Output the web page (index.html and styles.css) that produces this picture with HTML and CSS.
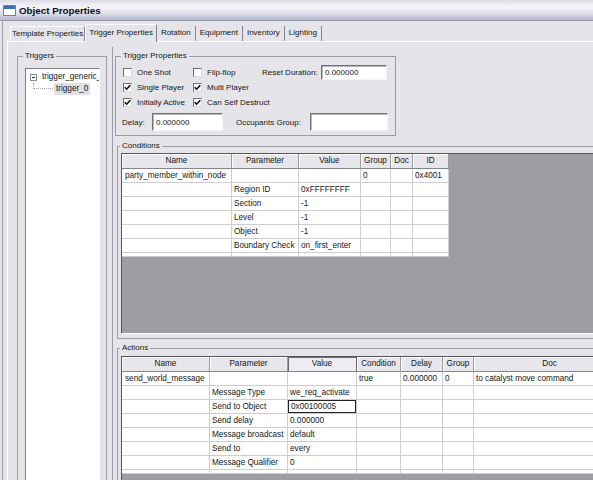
FILE: index.html
```html
<!DOCTYPE html>
<html>
<head>
<meta charset="utf-8">
<title>Object Properties</title>
<link rel="stylesheet" href="styles.css">
</head>
<body>
<div class="window">
  <div class="titlebar">
    <svg class="appicon" width="13" height="11" viewBox="0 0 13 11"><rect x="0.5" y="0.5" width="12" height="10" fill="#fff" stroke="#7a7f96"/><rect x="1" y="1" width="11" height="3" fill="#3f6bb0"/></svg>
    <span class="title">Object Properties</span>
  </div>
  <div class="frame">
    <div class="tabstrip">
      <div class="tab tab-first">Template Properties</div>
      <div class="tab tab-active">Trigger Properties</div>
      <div class="tab">Rotation</div>
      <div class="tab">Equipment</div>
      <div class="tab">Inventory</div>
      <div class="tab">Lighting</div>
    </div>
    <div class="tabpanel">
      <fieldset class="group triggers">
        <legend>Triggers</legend>
        <div class="tree">
          <div class="node root"><span class="expander"></span><span class="nodetext">trigger_generic_node</span></div>
          <div class="node child"><span class="connector"></span><span class="nodetext sel">trigger_0</span></div>
        </div>
      </fieldset>
      <div class="rightcol">
        <fieldset class="group tprops">
          <legend>Trigger Properties</legend>
          <div class="tp-row">
            <label class="chk w1"><span class="cb"></span>One Shot</label>
            <label class="chk w2"><span class="cb"></span>Flip-flop</label>
            <span class="lbl w3">Reset Duration:</span>
            <span class="field f1">0.000000</span>
          </div>
          <div class="tp-row">
            <label class="chk w1"><span class="cb"><svg width="7" height="7" viewBox="0 0 7 7"><path d="M0.8 3.2 L2.6 5.2 L6.3 1.2" fill="none" stroke="#000" stroke-width="1.5"/></svg></span>Single Player</label>
            <label class="chk w2"><span class="cb"><svg width="7" height="7" viewBox="0 0 7 7"><path d="M0.8 3.2 L2.6 5.2 L6.3 1.2" fill="none" stroke="#000" stroke-width="1.5"/></svg></span>Multi Player</label>
          </div>
          <div class="tp-row">
            <label class="chk w1"><span class="cb"><svg width="7" height="7" viewBox="0 0 7 7"><path d="M0.8 3.2 L2.6 5.2 L6.3 1.2" fill="none" stroke="#000" stroke-width="1.5"/></svg></span>Initially Active</label>
            <label class="chk w2"><span class="cb"><svg width="7" height="7" viewBox="0 0 7 7"><path d="M0.8 3.2 L2.6 5.2 L6.3 1.2" fill="none" stroke="#000" stroke-width="1.5"/></svg></span>Can Self Destruct</label>
          </div>
          <div class="tp-row r4">
            <span class="lbl delay">Delay:</span>
            <span class="field f2">0.000000</span>
            <span class="lbl occ">Occupants Group:</span>
            <span class="field f3"></span>
          </div>
        </fieldset>

        <fieldset class="group conditions">
          <legend>Conditions</legend>
          <div class="grid cond">
            <div class="cells">
              <div class="h">Name</div><div class="h">Parameter</div><div class="h">Value</div><div class="h">Group</div><div class="h">Doc</div><div class="h">ID</div>
              <div class="c nm">party_member_within_node</div><div class="c"></div><div class="c"></div><div class="c">0</div><div class="c"></div><div class="c">0x4001</div>
              <div class="c nm"></div><div class="c">Region ID</div><div class="c">0xFFFFFFFF</div><div class="c"></div><div class="c"></div><div class="c"></div>
              <div class="c nm"></div><div class="c">Section</div><div class="c">-1</div><div class="c"></div><div class="c"></div><div class="c"></div>
              <div class="c nm"></div><div class="c">Level</div><div class="c">-1</div><div class="c"></div><div class="c"></div><div class="c"></div>
              <div class="c nm"></div><div class="c">Object</div><div class="c">-1</div><div class="c"></div><div class="c"></div><div class="c"></div>
              <div class="c nm"></div><div class="c">Boundary Check</div><div class="c">on_first_enter</div><div class="c"></div><div class="c"></div><div class="c"></div>
              <div class="c"></div><div class="c"></div><div class="c"></div><div class="c"></div><div class="c"></div><div class="c"></div>
            </div>
          </div>
        </fieldset>

        <fieldset class="group actions">
          <legend>Actions</legend>
          <div class="grid act">
            <div class="cells">
              <div class="h">Name</div><div class="h">Parameter</div><div class="h pressed">Value</div><div class="h">Condition</div><div class="h">Delay</div><div class="h">Group</div><div class="h">Doc</div>
              <div class="c nm">send_world_message</div><div class="c"></div><div class="c"></div><div class="c">true</div><div class="c">0.000000</div><div class="c">0</div><div class="c">to catalyst move command</div>
              <div class="c nm"></div><div class="c">Message Type</div><div class="c">we_req_activate</div><div class="c"></div><div class="c"></div><div class="c"></div><div class="c"></div>
              <div class="c nm"></div><div class="c">Send to Object</div><div class="c editing">0x00100005</div><div class="c"></div><div class="c"></div><div class="c"></div><div class="c"></div>
              <div class="c nm"></div><div class="c">Send delay</div><div class="c">0.000000</div><div class="c"></div><div class="c"></div><div class="c"></div><div class="c"></div>
              <div class="c nm"></div><div class="c">Message broadcast</div><div class="c">default</div><div class="c"></div><div class="c"></div><div class="c"></div><div class="c"></div>
              <div class="c nm"></div><div class="c">Send to</div><div class="c">every</div><div class="c"></div><div class="c"></div><div class="c"></div><div class="c"></div>
              <div class="c nm"></div><div class="c">Message Qualifier</div><div class="c">0</div><div class="c"></div><div class="c"></div><div class="c"></div><div class="c"></div>
              <div class="c"></div><div class="c"></div><div class="c"></div><div class="c"></div><div class="c"></div><div class="c"></div><div class="c"></div>
            </div>
          </div>
        </fieldset>
      </div>
    </div>
  </div>
</div>
</body>
</html>
```

FILE: styles.css
```css
* { box-sizing: border-box; }
html, body { margin: 0; padding: 0; }
body {
  background: #e4e4e9;
  font-family: "Liberation Sans", Arial, sans-serif;
  font-size: 8px;
  color: #161616;
}
.window {
  width: 593px;
  height: 480px;
  overflow: hidden;
  background: #e4e4e9;
}

/* title bar */
.titlebar {
  height: 21px;
  display: flex;
  align-items: center;
  padding-left: 3px;
  gap: 3px;
  background: linear-gradient(#dcdde6, #f5f5f9 35%, #dadce7 70%, #b3b7ca);
  border-bottom: 1px solid #9a9cae;
}
.appicon { display: block; margin-top: 1px; }
.title {
  font-weight: bold;
  font-size: 9.8px;
  color: #101018;
}

/* window frame below the title */
.frame {
  margin-left: 2px;
  border-left: 1px solid #a0a0a8;
  height: 459px;
}

/* tabs */
.tabstrip {
  height: 20px;
  display: flex;
  align-items: flex-end;
  padding-left: 7px;
}
.tab {
  height: 15px;
  line-height: 14px;
  padding: 0 4px;
  border-right: 1px solid #86868e;
  white-space: nowrap;
}
.tab-first {
  border-top: 1px solid #fff;
  border-left: 1px solid #fff;
  padding: 0 1px;
}
.tab-active {
  height: 18px;
  line-height: 16px;
  padding: 0 3px;
  margin-bottom: -1px;
  background: #e4e4e9;
  border-top: 1px solid #fff;
  border-left: 1px solid #fff;
  border-right: 1px solid #7e7e86;
  position: relative;
  z-index: 1;
}

.tabpanel {
  margin-left: 4px;
  border-top: 1px solid #fff;
  border-left: 1px solid #fff;
  display: flex;
  align-items: flex-start;
  padding-left: 9px;
  height: 439px;
}

/* group boxes */
.group {
  margin: 0;
  padding: 0;
  border: 1px solid #9c9ca6;
  min-width: 0;
}
.group legend {
  padding: 0 2px;
  margin-left: -2px;
  font-size: 8px;
  line-height: 10px;
  height: 10px;
}

.triggers {
  width: 90px;
  height: 440px;
  margin-top: 9px;
  padding: 7px 6px 0 7px;
}
.tree {
  background: #fff;
  border-top: 1px solid #7c7c84;
  border-left: 1px solid #7c7c84;
  border-right: 1px solid #fff;
  border-bottom: 1px solid #fff;
  height: 420px;
  overflow: hidden;
  padding-top: 2px;
}
.node {
  display: flex;
  height: 12px;
  white-space: nowrap;
}
.root {
  align-items: center;
  padding-left: 4px;
  gap: 5px;
}
.expander {
  flex: none;
  width: 7px;
  height: 7px;
  border: 1px solid #8c8c94;
  background: linear-gradient(#333, #333) center / 3px 1px no-repeat, #fff;
}
.nodetext {
  font-size: 8.2px;
  line-height: 12px;
}
.child {
  padding-left: 7px;
  align-items: flex-start;
}
.connector {
  flex: none;
  width: 20px;
  height: 6px;
  border-left: 1px dotted #a8a8b0;
  border-bottom: 1px dotted #a8a8b0;
}
.sel {
  margin-left: 1px;
  padding: 0 2px;
  background: #e0e0e6;
}

/* right column */
.rightcol {
  flex: 1;
  min-width: 0;
  margin-left: 5px;
  margin-top: 5px;
  border-left: 1px solid #9c9ca6;
  height: 440px;
}

.tprops {
  width: 281px;
  margin: 4px 0 0 2px;
  padding: 4px 0 4px 7px;
}
.tp-row {
  display: flex;
  align-items: center;
  height: 15px;
  white-space: nowrap;
}
.tp-row.r4 {
  height: 18px;
  margin-top: 3px;
}
.chk {
  display: flex;
  align-items: center;
  gap: 5px;
}
.w1 { width: 70px; }
.w2 { width: 68px; }
.w3 { width: 60px; padding-left: 1px; }
.cb {
  flex: none;
  width: 9px;
  height: 9px;
  background: #fff;
  border: 1px solid;
  border-color: #6e6e76 #d8d8de #d8d8de #6e6e76;
  display: flex;
  align-items: center;
  justify-content: center;
}
.cb svg { display: block; }
.field {
  background: #fff;
  border: 1px solid;
  border-color: #707078 #f4f4f8 #f4f4f8 #707078;
  box-shadow: inset 1px 1px 0 #b8b8c0;
  padding-left: 3px;
  display: flex;
  align-items: center;
}
.f1 { width: 66px; height: 15px; }
.f2 { width: 71px; height: 18px; }
.f3 { width: 78px; height: 18px; }
.delay { width: 30px; margin-left: -1px; }
.occ { width: 74px; margin-left: 13px; }

.conditions {
  width: 490px;
  margin: 5px 0 0 4px;
  padding: 2px 0 4px 3px;
}
.actions {
  width: 490px;
  margin: 4px 0 0 4px;
  padding: 3px 0 0 3px;
  height: 200px;
}
.conditions legend, .actions legend { margin-left: -1px; }

/* grids */
.grid {
  border: 1px solid;
  border-color: #55555b #fff #fff #55555b;
  background: #9d9da2;
  overflow: hidden;
}
.grid.cond { height: 181px; }
.grid.act { height: 140px; }
.cells {
  display: grid;
  width: max-content;
  font-size: 8.2px;
}
.cond .cells {
  grid-template-columns: 110px 67px 62px 30px 22px 36px;
  grid-template-rows: 15px repeat(6, 14px) 4px;
}
.act .cells {
  grid-template-columns: 88px 78px 69px 44px 42px 31px 152px;
  grid-template-rows: 15px repeat(7, 14px) 4px;
}
.h {
  background: #e6e6eb;
  border-right: 1px solid #9a9aa2;
  border-bottom: 1px solid #85858c;
  box-shadow: inset 1px 1px 0 #fff;
  text-align: center;
  line-height: 14px;
  white-space: nowrap;
  overflow: hidden;
}
.h.pressed {
  background: #ededf1;
  box-shadow: inset 1px 1px 0 #6a6a72;
  border-right-color: #6a6a72;
}
.c {
  background: #fff;
  border-right: 1px solid #cdcdd3;
  border-bottom: 1px solid #cdcdd3;
  line-height: 13px;
  padding-left: 2px;
  white-space: nowrap;
  overflow: hidden;
}
.c.nm { padding-left: 3px; }
.c.editing {
  box-shadow: inset 0 0 0 1px #222;
  padding-left: 3px;
}
```
